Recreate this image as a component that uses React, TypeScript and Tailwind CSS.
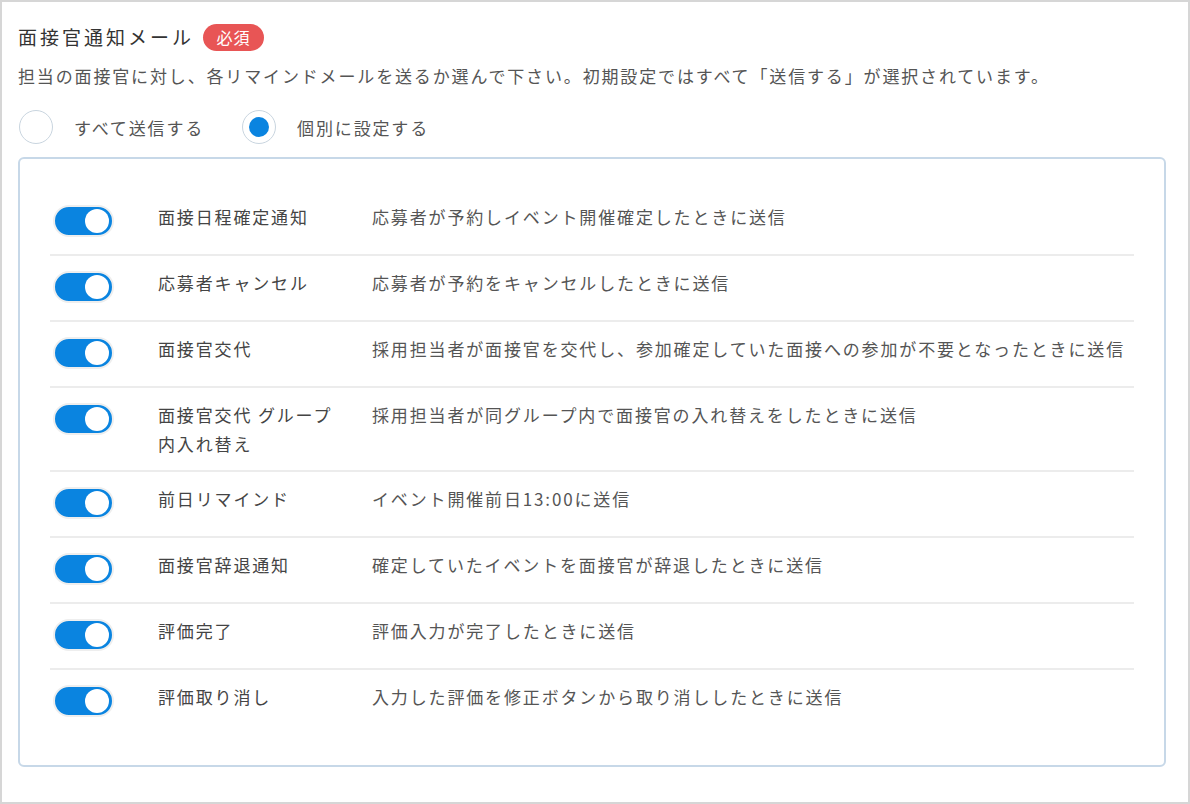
import { useState } from "react";

type Item = { label: string; desc: string };

const items: Item[] = [
  { label: "面接日程確定通知", desc: "応募者が予約しイベント開催確定したときに送信" },
  { label: "応募者キャンセル", desc: "応募者が予約をキャンセルしたときに送信" },
  { label: "面接官交代", desc: "採用担当者が面接官を交代し、参加確定していた面接への参加が不要となったときに送信" },
  { label: "面接官交代 グループ内入れ替え", desc: "採用担当者が同グループ内で面接官の入れ替えをしたときに送信" },
  { label: "前日リマインド", desc: "イベント開催前日13:00に送信" },
  { label: "面接官辞退通知", desc: "確定していたイベントを面接官が辞退したときに送信" },
  { label: "評価完了", desc: "評価入力が完了したときに送信" },
  { label: "評価取り消し", desc: "入力した評価を修正ボタンから取り消ししたときに送信" },
];

const Toggle = ({ on, onClick }: { on: boolean; onClick: () => void }) => (
  <button
    onClick={onClick}
    className={`ml-[3px] mt-[3px] flex h-[32px] w-[61px] items-center rounded-full border-[2px] border-[#eeeeee] px-[3px] ${
      on ? "justify-end bg-[#0a84e0]" : "justify-start bg-[#cfd6dc]"
    }`}
  >
    <span className="block h-[24px] w-[24px] rounded-full bg-white" />
  </button>
);

const Radio = ({ checked, label, onClick }: { checked: boolean; label: string; onClick: () => void }) => (
  <button onClick={onClick} className="flex items-center">
    <span className="flex h-[34px] w-[34px] items-center justify-center rounded-full border border-[#c9d5df] bg-white">
      {checked && <span className="block h-[20px] w-[20px] rounded-full bg-[#0a84e0]" />}
    </span>
    <span className="ml-[21px] text-[17px] leading-[29px] tracking-[1.85px] text-[#555555]">{label}</span>
  </button>
);

export default function App() {
  const [mode, setMode] = useState<"all" | "each">("each");
  const [flags, setFlags] = useState<boolean[]>(items.map(() => true));

  return (
    <div
      className="flex h-[804px] w-[1190px] flex-col border-2 border-[#d6d6d6] bg-white pl-[16px] pr-[22px] pt-[20px]"
      style={{ fontFamily: '"Noto Sans CJK JP", "Noto Sans", sans-serif' }}
    >
      <div className="flex items-center">
        <h2 className="text-[19px] leading-[30px] tracking-[3px] text-[#333333]">面接官通知メール</h2>
        <span className="ml-[9px] flex h-[27px] w-[61px] items-center justify-center rounded-full bg-[#e85555] text-[16px] tracking-[1px] text-white">
          必須
        </span>
      </div>
      <p className="mt-[9px] whitespace-nowrap text-[17px] leading-[29px] tracking-[1.85px] text-[#555555]">
        担当の面接官に対し、各リマインドメールを送るか選んで下さい。初期設定ではすべて「送信する」が選択されています。
      </p>
      <div className="mt-[20px] flex items-center gap-[38px] pl-[1px]">
        <Radio checked={mode === "all"} label="すべて送信する" onClick={() => setMode("all")} />
        <Radio checked={mode === "each"} label="個別に設定する" onClick={() => setMode("each")} />
      </div>
      <div className="mt-[13px] rounded-[6px] border-2 border-[#c7d8e8] px-[30px] pb-[31px] pt-[31px]">
        <div className="divide-y-2 divide-[#ececec]">
          {items.map((it, i) => (
            <div key={it.label} className="flex items-start py-[12px]">
              <div className="h-[40px] w-[108px] shrink-0">
                <Toggle
                  on={flags[i]}
                  onClick={() => setFlags((f) => f.map((v, j) => (j === i ? !v : v)))}
                />
              </div>
              <div className="w-[214px] shrink-0 pr-[32px] text-[17px] leading-[29px] tracking-[1.85px] text-[#444444]">
                {it.label}
              </div>
              <div className="whitespace-nowrap text-[17px] leading-[29px] tracking-[1.85px] text-[#555555]">
                {it.desc}
              </div>
            </div>
          ))}
        </div>
      </div>
    </div>
  );
}
